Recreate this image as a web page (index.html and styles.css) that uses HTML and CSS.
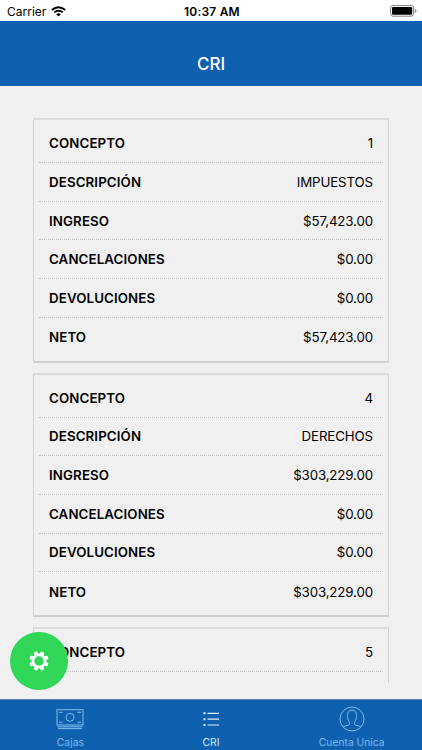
FILE: index.html
```
<!DOCTYPE html>
<html lang="es">
<head>
    <meta charset="UTF-8">
    <meta name="viewport" content="width=device-width, initial-scale=1.0">
    <title>CRI</title>
    <link rel="stylesheet" href="styles.css">
</head>
<body>
    <div class="status-bar">
        <div class="carrier">
            <span>Carrier</span>
            <svg class="wifi" viewBox="0 0 15 11" width="15" height="11">
                <path d="M0.8 4 Q7.5 -1.6 14.2 4" fill="none" stroke="#000" stroke-width="2"/>
                <path d="M3.2 6.4 Q7.5 3 11.8 6.4" fill="none" stroke="#000" stroke-width="1.8"/>
                <path d="M5.2 8.2 Q7.5 6.4 9.8 8.2 L7.5 10.5 Z"/>
            </svg>
        </div>
        <div class="clock">10:37 AM</div>
        <div class="battery">
            <svg viewBox="0 0 27 12" width="27" height="12">
                <rect x="0.6" y="0.6" width="23" height="10.6" rx="2.4" fill="none" stroke="#808080"/>
                <rect x="2" y="2" width="20.2" height="7.8" rx="1.2"/>
                <path d="M24.9 4 Q26.5 4.5 26.5 6 Q26.5 7.5 24.9 8 Z" fill="#808080"/>
            </svg>
        </div>
    </div>

    <header class="header">
        <h1>CRI</h1>
    </header>

    <main class="content">
        <div class="list">
            <div class="card">
                <div class="row"><b>CONCEPTO</b><span>1</span></div>
                <div class="row"><b>DESCRIPCIÓN</b><span>IMPUESTOS</span></div>
                <div class="row"><b>INGRESO</b><span>$57,423.00</span></div>
                <div class="row"><b>CANCELACIONES</b><span>$0.00</span></div>
                <div class="row"><b>DEVOLUCIONES</b><span>$0.00</span></div>
                <div class="row"><b>NETO</b><span>$57,423.00</span></div>
            </div>
            <div class="card">
                <div class="row"><b>CONCEPTO</b><span>4</span></div>
                <div class="row"><b>DESCRIPCIÓN</b><span>DERECHOS</span></div>
                <div class="row"><b>INGRESO</b><span>$303,229.00</span></div>
                <div class="row"><b>CANCELACIONES</b><span>$0.00</span></div>
                <div class="row"><b>DEVOLUCIONES</b><span>$0.00</span></div>
                <div class="row"><b>NETO</b><span>$303,229.00</span></div>
            </div>
            <div class="card">
                <div class="row"><b>CONCEPTO</b><span>5</span></div>
                <div class="row"><b>DESCRIPCIÓN</b></div>
            </div>
        </div>
    </main>

    <button class="fab" aria-label="Ajustes">
        <svg viewBox="-10 -10 20 20" width="20" height="20">
            <g fill="#fff">
                <rect x="-1.9" y="-9.7" width="3.8" height="19.4" rx="0.8" transform="rotate(22.5)"/>
                <rect x="-1.9" y="-9.7" width="3.8" height="19.4" rx="0.8" transform="rotate(67.5)"/>
                <rect x="-1.9" y="-9.7" width="3.8" height="19.4" rx="0.8" transform="rotate(112.5)"/>
                <rect x="-1.9" y="-9.7" width="3.8" height="19.4" rx="0.8" transform="rotate(157.5)"/>
                <circle r="7.4"/>
            </g>
            <circle r="4.7" fill="#30d655"/>
        </svg>
    </button>

    <nav class="tab-bar">
        <a class="tab">
            <svg viewBox="0 0 28 28" width="28" height="28">
                <rect x="1" y="4.7" width="26" height="15.3"/>
                <circle cx="14" cy="12.3" r="4"/>
                <path d="M3 7.3H6.5M21.5 7.3H25M3 17.3H6.5M21.5 17.3H25M1.5 21.8H26.5M2 23.6H26"/>
            </svg>
            <span>Cajas</span>
        </a>
        <a class="tab active">
            <svg viewBox="0 0 28 28" width="28" height="28">
                <path stroke-width="1.2" d="M10.5 8.3H22M10.5 14.2H22M10.5 20H22"/>
                <path stroke-width="2" d="M6.5 8.3H8.5M6.5 14.2H8.5M6.5 20H8.5"/>
            </svg>
            <span>CRI</span>
        </a>
        <a class="tab">
            <svg viewBox="0 0 28 28" width="28" height="28">
                <circle cx="14" cy="14" r="12"/>
                <path d="M5.2 22 C6.5 20.3 11.7 20.8 11.7 18.7 C11.7 17 10.3 16 10 13.6 C8.9 12.8 9.4 11.5 9.7 10.8 C9.2 7.3 11 5 14 5 C17 5 18.8 7.3 18.3 10.8 C18.6 11.5 19.1 12.8 18 13.6 C17.7 16 16.3 17 16.3 18.7 C16.3 20.8 21.5 20.3 22.8 22"/>
            </svg>
            <span>Cuenta Unica</span>
        </a>
    </nav>
</body>
</html>
```
FILE: styles.css
```
* {
    box-sizing: border-box;
}

body {
    margin: 0;
    height: 750px;
    display: flex;
    flex-direction: column;
    overflow: hidden;
    position: relative;
    font-family: Inter, Roboto, sans-serif;
    color: #000;
    background-color: #f0f0f0;
}

.status-bar {
    height: 21px;
    display: grid;
    grid-template-columns: 1fr auto 1fr;
    align-items: center;
    padding: 1px 5px 0 7px;
    background-color: #fff;
    font-size: 12px;
}

.carrier {
    display: flex;
    align-items: center;
    gap: 5px;
}

.clock {
    font-weight: 600;
    letter-spacing: 0.2px;
}

.battery {
    display: flex;
    justify-content: flex-end;
}

.header {
    height: 65px;
    padding-top: 20px;
    display: flex;
    align-items: center;
    justify-content: center;
    background-color: #1060b0;
    color: #fff;
}

.header h1 {
    margin: 0;
    font-size: 17px;
    font-weight: 500;
}

.content {
    flex: 1;
    min-height: 0;
    padding: 0 33px 16px;
}

.list {
    height: 100%;
    padding-top: 32.4px;
    overflow: hidden;
}

.card {
    border: 1px solid #d4d4d4;
    border-width: 2px 1px 2px 1px;
    border-color: #dcdcdc #d4d4d4 #d0d0d0 #d4d4d4;
    padding: 4px 5px 4.3px;
    margin-bottom: 10px;
}

.row {
    height: 38.7px;
    display: flex;
    align-items: center;
    justify-content: space-between;
    padding: 0 10px;
    border-bottom: 1px dotted #c0c0c0;
    font-size: 13.3px;
}

.row:last-child {
    border-bottom: none;
}

.row b {
    font-weight: 600;
    letter-spacing: 0.12px;
}

.row span {
    letter-spacing: -0.13px;
}

.fab {
    position: absolute;
    left: 10px;
    top: 632px;
    width: 58px;
    height: 58px;
    display: flex;
    align-items: center;
    justify-content: center;
    padding: 0;
    border: none;
    border-radius: 50%;
    background-color: #30d655;
}

.tab-bar {
    height: 51px;
    display: flex;
    border-top: 1px solid #5c86ae;
    background-color: #1060b0;
}

.tab {
    flex: 1;
    display: flex;
    flex-direction: column;
    align-items: center;
    padding-top: 5px;
    color: #7cbcec;
    font-size: 10.3px;
    line-height: 13px;
}

.tab svg {
    fill: none;
    stroke: currentColor;
    stroke-width: 1;
    margin-bottom: 3px;
}

.tab.active {
    color: #d8f0ff;
}
```
